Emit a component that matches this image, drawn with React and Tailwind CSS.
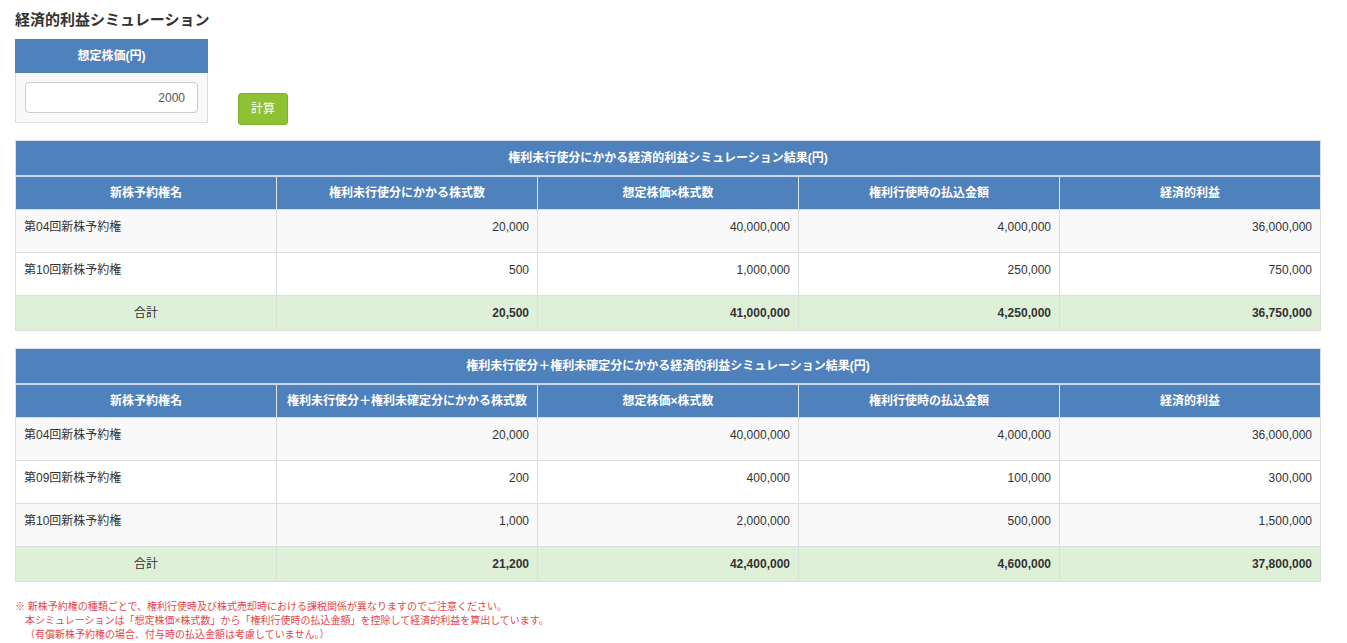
import React from 'react';

const table1 = {
    title: '権利未行使分にかかる経済的利益シミュレーション結果(円)',
    headers: ['新株予約権名', '権利未行使分にかかる株式数', '想定株価×株式数', '権利行使時の払込金額', '経済的利益'],
    rows: [
        ['第04回新株予約権', '20,000', '40,000,000', '4,000,000', '36,000,000'],
        ['第10回新株予約権', '500', '1,000,000', '250,000', '750,000'],
    ],
    total: ['20,500', '41,000,000', '4,250,000', '36,750,000'],
};

const table2 = {
    title: '権利未行使分＋権利未確定分にかかる経済的利益シミュレーション結果(円)',
    headers: ['新株予約権名', '権利未行使分＋権利未確定分にかかる株式数', '想定株価×株式数', '権利行使時の払込金額', '経済的利益'],
    rows: [
        ['第04回新株予約権', '20,000', '40,000,000', '4,000,000', '36,000,000'],
        ['第09回新株予約権', '200', '400,000', '100,000', '300,000'],
        ['第10回新株予約権', '1,000', '2,000,000', '500,000', '1,500,000'],
    ],
    total: ['21,200', '42,400,000', '4,600,000', '37,800,000'],
};

const ResultTable = ({ data }) => (
    <table className="w-[1306px] table-fixed border-collapse border border-[#dddddd] text-[12px] text-[#333]">
        <thead>
            <tr className="h-[35px] bg-[#4f81bd]">
                <th colSpan={5} className="border-b-2 border-[#c9d9ec] text-center font-bold text-white">
                    {data.title}
                </th>
            </tr>
            <tr className="h-[34px] bg-[#4f81bd]">
                {data.headers.map((h, i) => (
                    <th key={i} className="border-x border-[#dfe7f1] text-center font-bold text-white">
                        {h}
                    </th>
                ))}
            </tr>
        </thead>
        <tbody>
            {data.rows.map((row, r) => (
                <tr key={r} className={`h-[43px] ${r % 2 === 0 ? 'bg-[#f9f9f9]' : 'bg-white'}`}>
                    {row.map((cell, c) => (
                        <td
                            key={c}
                            className={`border border-[#dddddd] px-2 pt-[8px] align-top ${c === 0 ? 'text-left' : 'text-right'}`}
                        >
                            {cell}
                        </td>
                    ))}
                </tr>
            ))}
            <tr className="h-[35px] bg-[#dff0d8]">
                <td className="border border-[#dddddd] text-center">合計</td>
                {data.total.map((v, i) => (
                    <td key={i} className="border border-[#dddddd] px-2 text-right font-bold">
                        {v}
                    </td>
                ))}
            </tr>
        </tbody>
    </table>
);

export default function App() {
    return (
        <div className="min-h-[643px] bg-white px-[15px] pt-[10px] font-['Liberation_Sans','Noto_Sans_CJK_JP',sans-serif] text-[#333]">
            <h2 className="text-[15px] font-bold leading-[20px]">経済的利益シミュレーション</h2>

            <div className="mt-[9px] flex gap-[30px]">
                <div className="w-[193px]">
                    <div className="flex h-[34px] items-center justify-center bg-[#4f81bd] text-[12px] font-bold text-white">
                        想定株価(円)
                    </div>
                    <div className="border border-t-0 border-[#dddddd] bg-[#f9f9f9] px-[9px] py-[9px]">
                        <input
                            type="text"
                            defaultValue="2000"
                            className="h-[31px] w-full rounded-[4px] border border-[#cccccc] bg-white px-3 text-right text-[12px] text-[#555] outline-none"
                        />
                    </div>
                </div>
                <button className="mt-[54px] h-[32px] w-[50px] rounded-[3px] border border-[#7fb02a] bg-[#8dc234] text-[12px] text-white">
                    計算
                </button>
            </div>

            <div className="mt-[15px]">
                <ResultTable data={table1} />
            </div>
            <div className="mt-[17px]">
                <ResultTable data={table2} />
            </div>

            <div className="mt-[18px] text-[10px] leading-[14px] text-[#e8454a]">
                <p>※ 新株予約権の種類ごとで、権利行使時及び株式売却時における課税関係が異なりますのでご注意ください。</p>
                <p className="pl-[10px]">本シミュレーションは「想定株価×株式数」から「権利行使時の払込金額」を控除して経済的利益を算出しています。</p>
                <p className="pl-[10px]">（有償新株予約権の場合、付与時の払込金額は考慮していません。）</p>
            </div>
        </div>
    );
}
